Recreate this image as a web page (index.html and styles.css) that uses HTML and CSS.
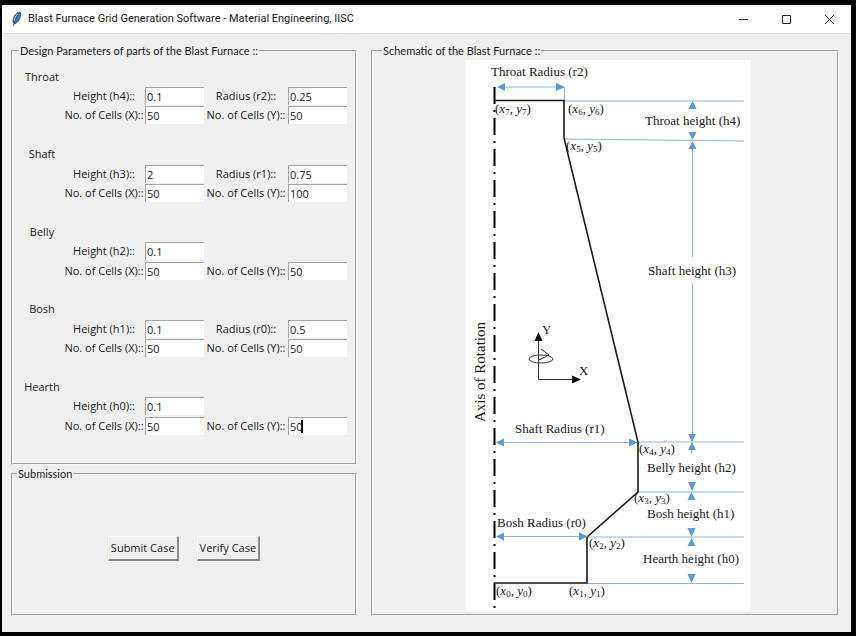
FILE: index.html
```html
<!DOCTYPE html>
<html lang="en">
<head>
<meta charset="utf-8">
<title>Blast Furnace Grid Generation Software - Material Engineering, IISC</title>
<link rel="stylesheet" href="styles.css">
</head>
<body>
<div class="window">
  <header class="titlebar">
    <svg class="app-icon" viewBox="0 0 12 18" aria-hidden="true">
      <path d="M2.500 13C1 8 4 3 9 2C10.500 5 9 11 4 14Z" fill="#3f7fbd" stroke="#24364a" stroke-width="0.800"/>
      <path d="M8.500 3C5 7 3.500 11 2.500 16" fill="none" stroke="#1c2b3c" stroke-width="0.800"/>
      <path d="M7 4C4.500 6 3.500 8 3.500 11" fill="none" stroke="#a9d0ee" stroke-width="1"/>
    </svg>
    <h1 class="title">Blast Furnace Grid Generation Software - Material Engineering, IISC</h1>
    <div class="controls">
      <button class="control" type="button" aria-label="Minimize"><svg viewBox="0 0 11 11"><path d="M1 5.500H10"/></svg></button>
      <button class="control" type="button" aria-label="Maximize"><svg viewBox="0 0 11 11"><path d="M1.500 1.500H9.500V9.500H1.500Z"/></svg></button>
      <button class="control" type="button" aria-label="Close"><svg viewBox="0 0 11 11"><path d="M1 1L10 10M10 1L1 10"/></svg></button>
    </div>
  </header>
  <main class="content">
    <form class="side">
      <fieldset class="frame design">
        <legend>Design Parameters of parts of the Blast Furnace ::</legend>
        <div class="parts">
          <section class="part">
            <h2>Throat</h2>
            <label class="c1" for="h4">Height (h4)::</label><input id="h4" value="0.1">
            <label class="c3" for="r2">Radius (r2)::</label><input id="r2" value="0.25">
            <label class="c1" for="tx">No. of Cells (X)::</label><input id="tx" value="50">
            <label class="c3" for="ty">No. of Cells (Y)::</label><input id="ty" value="50">
          </section>
          <section class="part">
            <h2>Shaft</h2>
            <label class="c1" for="h3">Height (h3)::</label><input id="h3" value="2">
            <label class="c3" for="r1">Radius (r1)::</label><input id="r1" value="0.75">
            <label class="c1" for="sx">No. of Cells (X)::</label><input id="sx" value="50">
            <label class="c3" for="sy">No. of Cells (Y)::</label><input id="sy" value="100">
          </section>
          <section class="part">
            <h2>Belly</h2>
            <label class="c1" for="h2">Height (h2)::</label><input id="h2" value="0.1">
            <label class="c1" for="bx">No. of Cells (X)::</label><input id="bx" value="50">
            <label class="c3" for="by">No. of Cells (Y)::</label><input id="by" value="50">
          </section>
          <section class="part">
            <h2>Bosh</h2>
            <label class="c1" for="h1">Height (h1)::</label><input id="h1" value="0.1">
            <label class="c3" for="r0">Radius (r0)::</label><input id="r0" value="0.5">
            <label class="c1" for="ox">No. of Cells (X)::</label><input id="ox" value="50">
            <label class="c3" for="oy">No. of Cells (Y)::</label><input id="oy" value="50">
          </section>
          <section class="part">
            <h2>Hearth</h2>
            <label class="c1" for="h0">Height (h0)::</label><input id="h0" value="0.1">
            <label class="c1" for="hx">No. of Cells (X)::</label><input id="hx" value="50">
            <label class="c3" for="hy">No. of Cells (Y)::</label>
            <div class="active"><input id="hy" value="50"><span class="caret"></span></div>
          </section>
        </div>
      </fieldset>
      <fieldset class="frame submission">
        <legend>Submission</legend>
        <div class="actions">
          <button class="action" type="button">Submit Case</button>
          <button class="action" type="button">Verify Case</button>
        </div>
      </fieldset>
    </form>
    <fieldset class="frame schematic">
      <legend>Schematic of the Blast Furnace ::</legend>
      <svg class="diagram" viewBox="465 60 286 551" role="img" aria-label="Schematic of the blast furnace">
        <rect x="465" y="60" width="286" height="551" fill="#fff"/>
        <g class="guide">
          <path d="M564.500 87V101M564 101H744M564 139L744 141M638 442H744M638 492H744M587 537H744M587 583.500H744"/>
          <path d="M500 87H562M498 442.500H634M498 536.500H584M692.500 146V257M692.500 284V438M691.500 446V453"/>
        </g>
        <path class="axis" d="M494.500 87V611"/>
        <path class="wall" d="M494 100.500H564V138L638 442V492L587 537V583H494"/>
        <g class="heads">
          <path d="M497 87l8-4v8zM565 87l-9-4v8z"/>
          <path d="M496 442.500l8-4v8zM638 442.500l-9-4v8z"/>
          <path d="M496 536.500l8-4v8zM588 536.500l-9-4v8z"/>
          <path d="M692.500 101l-4 8h8zM692.500 140l-4-8h8zM692.500 141l-4 8h8z"/>
          <path d="M692 442l-4-8h8zM692 442l-4 8h8z"/>
          <path d="M692 491l-4-9h8zM691.500 492l-4 8h8z"/>
          <path d="M691.500 537l-4-9h8zM691.500 538l-4 8h8z"/>
          <path d="M691.500 583l-4-9h8z"/>
        </g>
        <g class="compass">
          <path d="M538.500 341V379.500H573"/>
          <ellipse cx="541" cy="359" rx="12" ry="4"/>
          <path d="M541 349L549 355L539 360"/>
          <path class="tip" d="M538.500 332l-4 9h8zM581 379.500l-9-4v8z"/>
        </g>
        <g class="names">
          <text x="491" y="76">Throat Radius (r2)</text>
          <text x="645" y="125">Throat height (h4)</text>
          <text x="648" y="275">Shaft height (h3)</text>
          <text x="515" y="433">Shaft Radius (r1)</text>
          <text x="647" y="472">Belly height (h2)</text>
          <text x="647" y="518">Bosh height (h1)</text>
          <text x="497" y="527">Bosh Radius (r0)</text>
          <text x="643" y="563">Hearth height (h0)</text>
          <text x="542" y="334">Y</text>
          <text x="579" y="375">X</text>
          <text class="axis-name" transform="translate(485 422) rotate(-90)">Axis of Rotation</text>
        </g>
        <g class="points">
          <text x="495" y="113">(<tspan class="v">x</tspan><tspan class="s" dy="2">7</tspan><tspan dy="-2">, </tspan><tspan class="v">y</tspan><tspan class="s" dy="2">7</tspan><tspan dy="-2">)</tspan></text>
          <text x="568" y="113">(<tspan class="v">x</tspan><tspan class="s" dy="2">6</tspan><tspan dy="-2">, </tspan><tspan class="v">y</tspan><tspan class="s" dy="2">6</tspan><tspan dy="-2">)</tspan></text>
          <text x="566" y="150">(<tspan class="v">x</tspan><tspan class="s" dy="2">5</tspan><tspan dy="-2">, </tspan><tspan class="v">y</tspan><tspan class="s" dy="2">5</tspan><tspan dy="-2">)</tspan></text>
          <text x="639" y="453">(<tspan class="v">x</tspan><tspan class="s" dy="2">4</tspan><tspan dy="-2">, </tspan><tspan class="v">y</tspan><tspan class="s" dy="2">4</tspan><tspan dy="-2">)</tspan></text>
          <text x="634" y="502">(<tspan class="v">x</tspan><tspan class="s" dy="2">3</tspan><tspan dy="-2">, </tspan><tspan class="v">y</tspan><tspan class="s" dy="2">3</tspan><tspan dy="-2">)</tspan></text>
          <text x="589" y="547">(<tspan class="v">x</tspan><tspan class="s" dy="2">2</tspan><tspan dy="-2">, </tspan><tspan class="v">y</tspan><tspan class="s" dy="2">2</tspan><tspan dy="-2">)</tspan></text>
          <text x="569" y="595">(<tspan class="v">x</tspan><tspan class="s" dy="2">1</tspan><tspan dy="-2">, </tspan><tspan class="v">y</tspan><tspan class="s" dy="2">1</tspan><tspan dy="-2">)</tspan></text>
          <text x="496" y="595">(<tspan class="v">x</tspan><tspan class="s" dy="2">0</tspan><tspan dy="-2">, </tspan><tspan class="v">y</tspan><tspan class="s" dy="2">0</tspan><tspan dy="-2">)</tspan></text>
        </g>
      </svg>
    </fieldset>
  </main>
</div>
</body>
</html>
```

FILE: styles.css
```css
* { box-sizing: border-box; }

body {
  margin: 0;
  min-height: 100vh;
  padding: 5px 5px 4px 2px;
  display: flex;
  background: #000;
  color: #1a1a1a;
  font: 11px/16px "Open Sans", "Noto Sans", sans-serif;
}

.window {
  flex: 1;
  display: flex;
  flex-direction: column;
  background: #f0f0f0;
}

.titlebar {
  display: flex;
  align-items: center;
  height: 29px;
  padding-left: 9px;
  background: #fff;
  border-bottom: 1px solid #dcdcdc;
}

.app-icon { width: 12px; height: 18px; }

.title {
  margin: 0 0 0 5px;
  font-family: Roboto, sans-serif;
  font-size: 11px;
  font-weight: 400;
}

.controls { display: flex; margin-left: auto; }

.control {
  display: flex;
  align-items: center;
  justify-content: center;
  width: 43px;
  height: 28px;
  padding: 0;
  border: 0;
  background: none;
}

.control svg {
  width: 11px;
  height: 11px;
  fill: none;
  stroke: #222;
  stroke-width: 1;
}

.content {
  flex: 1;
  display: grid;
  grid-template-columns: 346fr 468fr;
  gap: 14px;
  padding: 9px 12px 16px 9px;
}

.side {
  display: grid;
  grid-template-rows: 422fr 150fr;
  gap: 1px;
}

.frame {
  display: flex;
  min-width: 0;
  margin: 0;
  padding: 0;
  border: 2px groove #f4f4f4;
}

.frame legend {
  margin-left: 4px;
  padding: 0 1px;
  font-family: Lato, sans-serif;
}

.design { padding: 8px 8px 8px 2px; }

.parts {
  flex: 1;
  display: grid;
  grid-template-rows: repeat(5, 1fr);
}

.part {
  display: grid;
  grid-template-columns: 48px 1fr 59px 84px 59px;
  grid-template-rows: repeat(4, 1fr);
  align-items: center;
}

.part h2 {
  grid-column: 1 / -1;
  width: 48px;
  margin: 0;
  padding-left: 6px;
  font-size: 11px;
  font-weight: 400;
  text-align: center;
}

.part label { text-align: center; white-space: nowrap; }
.part .c1 { grid-column: 2; }
.part .c3 { grid-column: 4; }

.part input {
  display: block;
  width: 100%;
  height: 18px;
  padding: 0 0 0 1px;
  border: solid #a5a5a5;
  border-width: 1px 0 0 1px;
  background: #fff;
  color: #1a1a1a;
  font: inherit;
}

.active { position: relative; }

.caret {
  position: absolute;
  top: 3px;
  left: 13px;
  width: 2px;
  height: 13px;
  background: #000;
}

.actions {
  flex: 1;
  display: flex;
  align-items: center;
  justify-content: center;
  gap: 18px;
}

.action {
  height: 25px;
  padding: 0 2px;
  border: solid;
  border-width: 1px 2px 2px 1px;
  border-color: #fff #888 #888 #fff;
  background: #f0f0f0;
  color: #1a1a1a;
  font: inherit;
}

.schematic {
  justify-content: center;
  align-items: center;
  padding: 0 0 2px 5px;
}

.diagram { width: 286px; max-width: 100%; }

.guide { fill: none; stroke: #8db5d8; stroke-width: 1; }
.heads { fill: #5b9bd5; }
.axis { fill: none; stroke: #000; stroke-width: 2; stroke-dasharray: 17 6 2 6; }
.wall { fill: none; stroke: #1a1a1a; stroke-width: 1.6; }
.compass { fill: none; stroke: #333; stroke-width: 1; }
.compass .tip { fill: #000; stroke: none; }

.names, .points {
  font-family: "Liberation Serif", serif;
  font-size: 13px;
  fill: #1a1a1a;
}

.axis-name { font-size: 15px; }
.v { font-style: italic; }
.s { font-size: 9px; }
```
